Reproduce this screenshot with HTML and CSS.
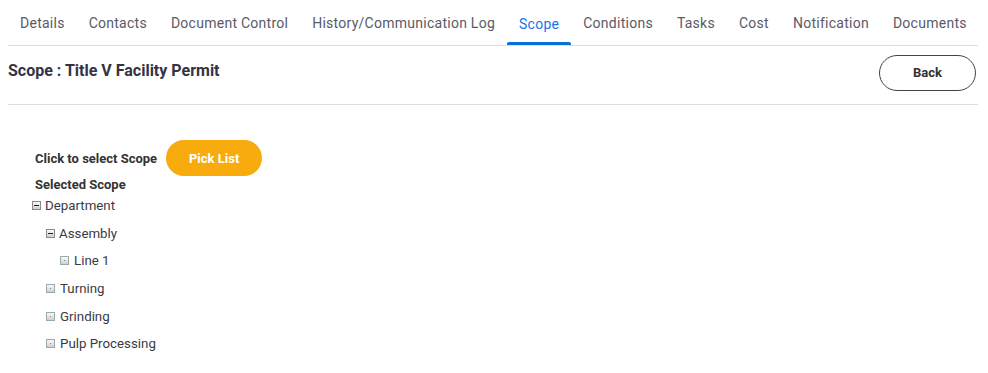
FILE: index.html
```html
<!DOCTYPE html>
<html>
<head>
<meta charset="utf-8">
<link rel="stylesheet" href="styles.css">
</head>
<body>
<nav class="tabs">
  <a class="tab">Details</a>
  <a class="tab">Contacts</a>
  <a class="tab">Document Control</a>
  <a class="tab">History/Communication Log</a>
  <a class="tab active">Scope</a>
  <a class="tab">Conditions</a>
  <a class="tab">Tasks</a>
  <a class="tab">Cost</a>
  <a class="tab">Notification</a>
  <a class="tab">Documents</a>
</nav>
<header class="head">
  <h1 class="title">Scope : Title V Facility Permit</h1>
  <button class="back">Back</button>
</header>
<main class="content">
  <div class="pick-row">
    <span class="label">Click to select Scope</span>
    <button class="pick">Pick List</button>
  </div>
  <div class="label selected">Selected Scope</div>
  <ul class="tree">
    <li>
      <div class="node"><span class="ico minus"></span>Department</div>
      <ul class="tree sub">
        <li>
          <div class="node"><span class="ico minus"></span>Assembly</div>
          <ul class="tree sub">
            <li><div class="node"><span class="ico leaf"></span>Line 1</div></li>
          </ul>
        </li>
        <li><div class="node"><span class="ico leaf"></span>Turning</div></li>
        <li><div class="node"><span class="ico leaf"></span>Grinding</div></li>
        <li><div class="node"><span class="ico leaf"></span>Pulp Processing</div></li>
      </ul>
    </li>
  </ul>
</main>
</body>
</html>
```

FILE: styles.css
```css
html, body {
  margin: 0;
  padding: 0;
  background: #fff;
}
body {
  margin: 0 10px 0 8px;
  font-family: Roboto, "Liberation Sans", sans-serif;
  color: #333;
}
.tabs {
  display: flex;
  height: 45px;
  border-bottom: 1px solid #dedede;
  align-items: stretch;
  overflow: hidden;
}
.tab {
  position: relative;
  display: flex;
  flex: none;
  white-space: nowrap;
  align-items: center;
  padding: 1px 12px 0;
  font-size: 14px;
  letter-spacing: 0.26px;
  color: #5a5a66;
  cursor: pointer;
}
.tab.active {
  color: #1a73e8;
  padding-top: 2px;
}
.tab.active::after {
  content: "";
  position: absolute;
  left: 0;
  right: 0;
  bottom: 0;
  height: 3px;
  background: #0b6fd9;
  border-radius: 2px 2px 0 0;
}
.head {
  display: flex;
  align-items: center;
  justify-content: space-between;
  height: 58px;
  border-bottom: 1px solid #dedede;
}
.title {
  margin: 0;
  font-size: 16px;
  font-weight: 700;
  color: #333344;
  padding-bottom: 9px;
}
.back {
  width: 97px;
  height: 36px;
  margin-right: 2px;
  margin-bottom: 5px;
  border: 1px solid #444;
  border-radius: 18px;
  background: #fff;
  font-family: Roboto, "Liberation Sans", sans-serif;
  font-size: 13px;
  font-weight: 700;
  color: #333;
}
.content {
  padding: 35px 0 0 27px;
}
.pick-row {
  display: flex;
  align-items: center;
  gap: 9px;
}
.label {
  font-size: 13px;
  font-weight: 700;
  color: #333;
}
.pick {
  width: 96px;
  height: 36px;
  border: none;
  border-radius: 18px;
  background: #f8ab0c;
  color: #fff;
  font-family: Roboto, "Liberation Sans", sans-serif;
  font-size: 13px;
  font-weight: 700;
}
.selected {
  margin-top: 1px;
  line-height: 16px;
}
.tree {
  list-style: none;
  margin: 0;
  padding: 0;
}
.content > .tree {
  margin: -1px 0 0 -3px;
}
.tree.sub {
  padding-left: 14px;
}
.node {
  display: flex;
  align-items: center;
  height: 27.6px;
  font-size: 13.3px;
  color: #3a3a44;
}
.ico {
  position: relative;
  box-sizing: border-box;
  width: 9px;
  height: 9px;
  margin-right: 4px;
  border: 1px solid #8a8a8a;
  background: linear-gradient(#fafafa, #cfcfcf);
  flex: none;
}
.ico.minus::after {
  content: "";
  position: absolute;
  left: 1px;
  right: 1px;
  top: 3px;
  height: 1px;
  background: #222;
}
.ico.leaf {
  border-color: #9aa;
  margin-right: 5px;
}
.ico.leaf::after {
  content: "";
  position: absolute;
  left: 3px;
  top: 3px;
  width: 1px;
  height: 1px;
  background: #888;
}
```
